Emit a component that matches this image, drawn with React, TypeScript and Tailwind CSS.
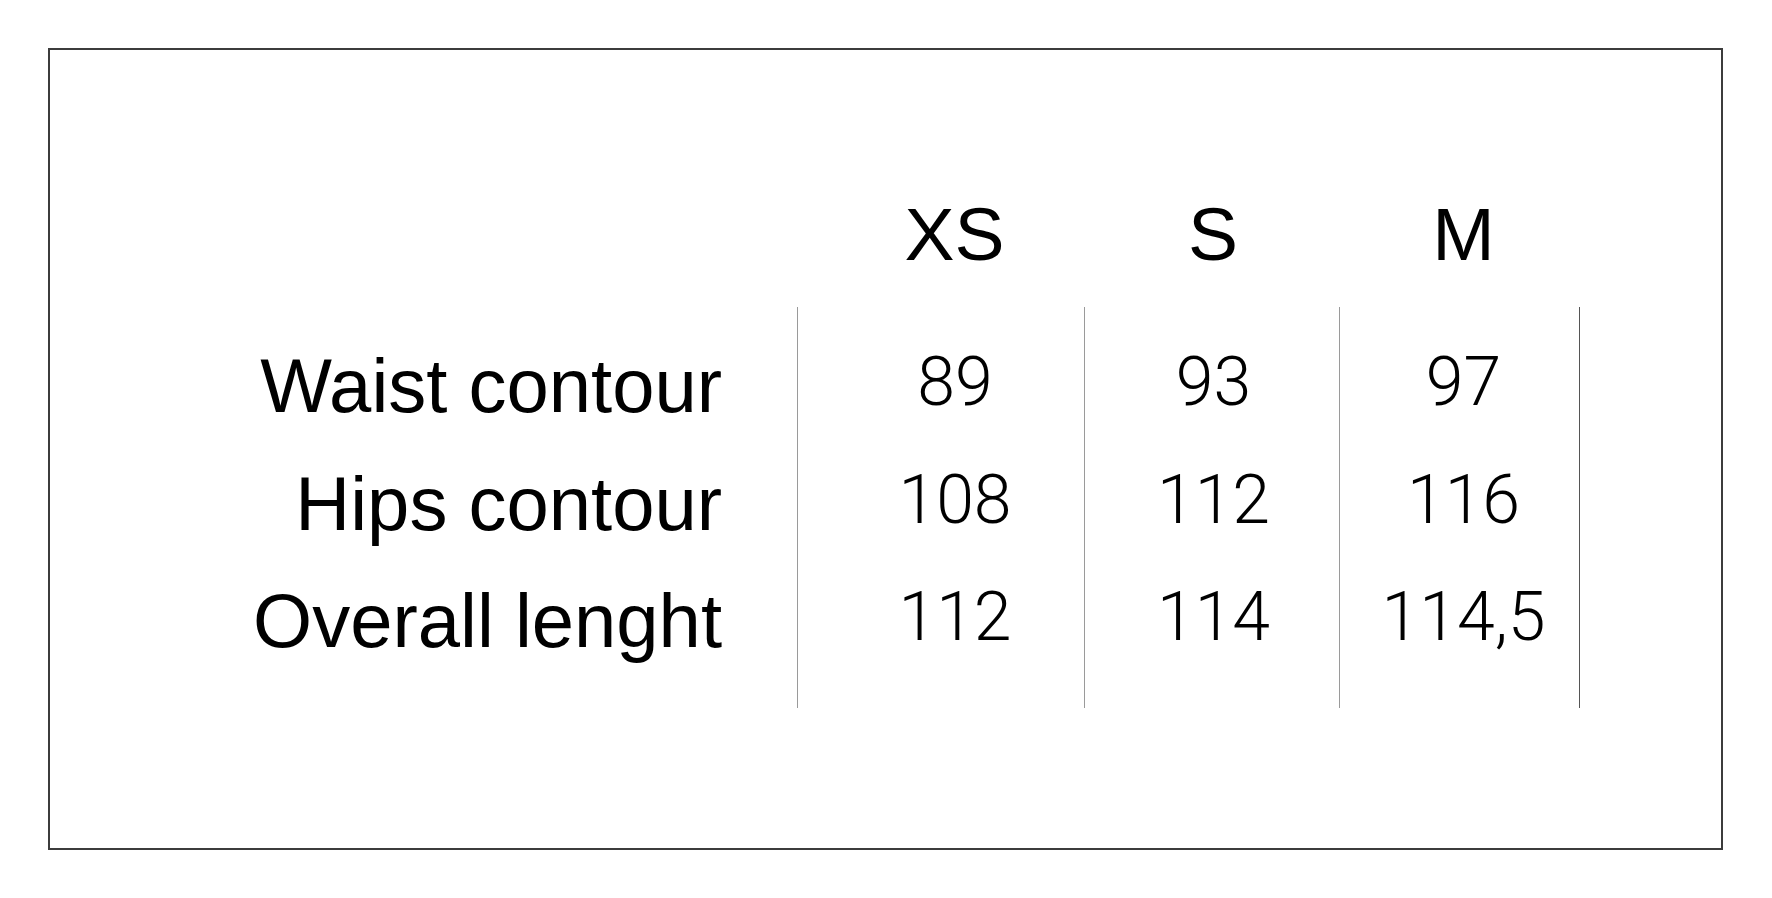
const sizes = ['XS', 'S', 'M'];

const rows = [
  { label: 'Waist contour', values: ['89', '93', '97'] },
  { label: 'Hips contour', values: ['108', '112', '116'] },
  { label: 'Overall lenght', values: ['112', '114', '114,5'] },
];

// each size column: width, left padding to nudge the centred text, border
const cols = [
  'w-[287px] pl-[28px] border-l border-[#9a9a9a]',
  'w-[255px] pl-[3px] border-l border-[#9a9a9a]',
  'w-[241px] pl-[8px] border-l border-r border-l-[#9a9a9a] border-r-[#555555]',
];

const headCols = ['w-[287px] pl-[28px]', 'w-[255px] pl-[3px]', 'w-[241px] pl-[8px]'];

export default function App() {
  return (
    <div className="min-h-[898px] w-[1772px] bg-white font-['Liberation_Sans',Arial,sans-serif] text-black">
      <div className="ml-[48px] pt-[48px]">
        <div className="box-border h-[802px] w-[1675px] border-2 border-[#3c3c3c]">
          {/* header */}
          <div className="mt-[147px] flex h-[75px] text-[75px] leading-[75px]">
            <div className="w-[747px] shrink-0" />
            {sizes.map((s, i) => (
              <div key={s} className={`${headCols[i]} box-border shrink-0 text-center`}>
                {s}
              </div>
            ))}
          </div>

          {/* body */}
          <div className="mt-[35px] flex h-[401px]">
            <div className="box-border w-[747px] shrink-0 pt-[20px] pr-[75px] text-right text-[76px]">
              {rows.map((r) => (
                <div key={r.label} className="h-[117.5px] leading-[117.5px] whitespace-nowrap">
                  {r.label}
                </div>
              ))}
            </div>
            {cols.map((c, i) => (
              <div key={i} className={`${c} box-border shrink-0 pt-[20px] text-center`}>
                {rows.map((r) => (
                  <div
                    key={r.label}
                    className="h-[117.5px] font-['Roboto',sans-serif] text-[68px] font-light leading-[111.5px]"
                  >
                    {r.values[i]}
                  </div>
                ))}
              </div>
            ))}
          </div>
        </div>
      </div>
    </div>
  );
}
